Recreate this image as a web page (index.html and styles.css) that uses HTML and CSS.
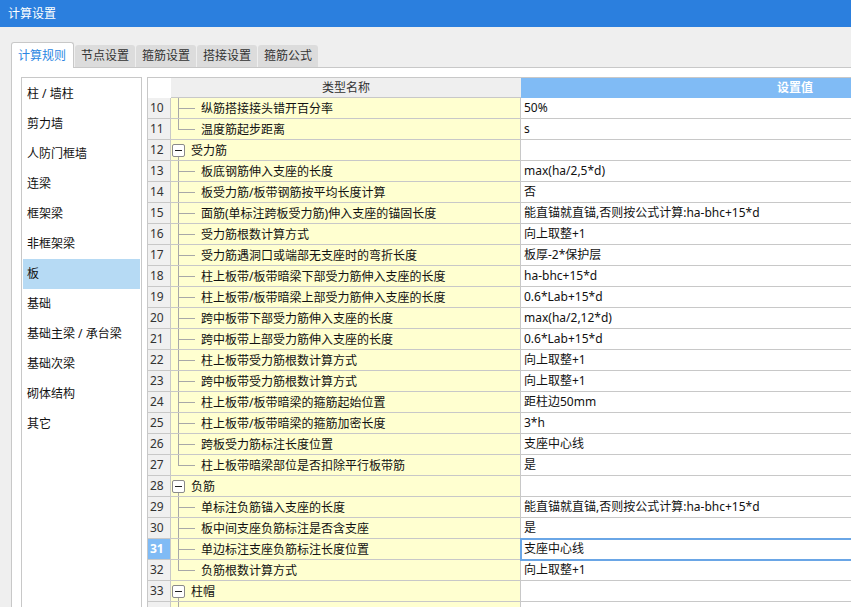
FILE: index.html
```html
<!DOCTYPE html>
<html lang="zh">
<head>
<meta charset="utf-8">
<title>计算设置</title>
<link rel="stylesheet" href="styles.css">
</head>
<body>
<div class="titlebar">计算设置</div>
<div class="tabs">
  <div class="tab active">计算规则</div>
  <div class="tab">节点设置</div>
  <div class="tab">箍筋设置</div>
  <div class="tab">搭接设置</div>
  <div class="tab">箍筋公式</div>
</div>
<div class="panel">
  <div class="sidebar">
    <div class="side-item">柱 / 墙柱</div>
    <div class="side-item">剪力墙</div>
    <div class="side-item">人防门框墙</div>
    <div class="side-item">连梁</div>
    <div class="side-item">框架梁</div>
    <div class="side-item">非框架梁</div>
    <div class="side-item sel">板</div>
    <div class="side-item">基础</div>
    <div class="side-item">基础主梁 / 承台梁</div>
    <div class="side-item">基础次梁</div>
    <div class="side-item">砌体结构</div>
    <div class="side-item">其它</div>
  </div>
  <div class="grid">
    <div class="row head">
      <div class="corner"></div>
      <div class="h-name">类型名称</div>
      <div class="h-value">设置值</div>
    </div>
    <div class="row"><div class="num">10</div><div class="name"><span class="tree"></span>纵筋搭接接头错开百分率</div><div class="val">50%</div></div>
    <div class="row"><div class="num">11</div><div class="name"><span class="tree last"></span>温度筋起步距离</div><div class="val">s</div></div>
    <div class="row"><div class="num">12</div><div class="name group"><span class="box"></span>受力筋</div><div class="val"></div></div>
    <div class="row"><div class="num">13</div><div class="name"><span class="tree"></span>板底钢筋伸入支座的长度</div><div class="val">max(ha/2,5*d)</div></div>
    <div class="row"><div class="num">14</div><div class="name"><span class="tree"></span>板受力筋/板带钢筋按平均长度计算</div><div class="val">否</div></div>
    <div class="row"><div class="num">15</div><div class="name"><span class="tree"></span>面筋(单标注跨板受力筋)伸入支座的锚固长度</div><div class="val">能直锚就直锚,否则按公式计算:ha-bhc+15*d</div></div>
    <div class="row"><div class="num">16</div><div class="name"><span class="tree"></span>受力筋根数计算方式</div><div class="val">向上取整+1</div></div>
    <div class="row"><div class="num">17</div><div class="name"><span class="tree"></span>受力筋遇洞口或端部无支座时的弯折长度</div><div class="val">板厚-2*保护层</div></div>
    <div class="row"><div class="num">18</div><div class="name"><span class="tree"></span>柱上板带/板带暗梁下部受力筋伸入支座的长度</div><div class="val">ha-bhc+15*d</div></div>
    <div class="row"><div class="num">19</div><div class="name"><span class="tree"></span>柱上板带/板带暗梁上部受力筋伸入支座的长度</div><div class="val">0.6*Lab+15*d</div></div>
    <div class="row"><div class="num">20</div><div class="name"><span class="tree"></span>跨中板带下部受力筋伸入支座的长度</div><div class="val">max(ha/2,12*d)</div></div>
    <div class="row"><div class="num">21</div><div class="name"><span class="tree"></span>跨中板带上部受力筋伸入支座的长度</div><div class="val">0.6*Lab+15*d</div></div>
    <div class="row"><div class="num">22</div><div class="name"><span class="tree"></span>柱上板带受力筋根数计算方式</div><div class="val">向上取整+1</div></div>
    <div class="row"><div class="num">23</div><div class="name"><span class="tree"></span>跨中板带受力筋根数计算方式</div><div class="val">向上取整+1</div></div>
    <div class="row"><div class="num">24</div><div class="name"><span class="tree"></span>柱上板带/板带暗梁的箍筋起始位置</div><div class="val">距柱边50mm</div></div>
    <div class="row"><div class="num">25</div><div class="name"><span class="tree"></span>柱上板带/板带暗梁的箍筋加密长度</div><div class="val">3*h</div></div>
    <div class="row"><div class="num">26</div><div class="name"><span class="tree"></span>跨板受力筋标注长度位置</div><div class="val">支座中心线</div></div>
    <div class="row"><div class="num">27</div><div class="name"><span class="tree last"></span>柱上板带暗梁部位是否扣除平行板带筋</div><div class="val">是</div></div>
    <div class="row"><div class="num">28</div><div class="name group"><span class="box"></span>负筋</div><div class="val"></div></div>
    <div class="row"><div class="num">29</div><div class="name"><span class="tree"></span>单标注负筋锚入支座的长度</div><div class="val">能直锚就直锚,否则按公式计算:ha-bhc+15*d</div></div>
    <div class="row"><div class="num">30</div><div class="name"><span class="tree"></span>板中间支座负筋标注是否含支座</div><div class="val">是</div></div>
    <div class="row"><div class="num sel">31</div><div class="name"><span class="tree"></span>单边标注支座负筋标注长度位置</div><div class="val sel">支座中心线</div></div>
    <div class="row"><div class="num">32</div><div class="name"><span class="tree last"></span>负筋根数计算方式</div><div class="val">向上取整+1</div></div>
    <div class="row"><div class="num">33</div><div class="name group"><span class="box"></span>柱帽</div><div class="val"></div></div>
    <div class="row"><div class="num"></div><div class="name"><span class="tree"></span></div><div class="val"></div></div>
  </div>
</div>
</body>
</html>
```
FILE: styles.css
```css
* { box-sizing: border-box; }
html, body { margin: 0; }
body {
  width: 851px;
  height: 607px;
  overflow: hidden;
  background: #efefef;
  font-family: "Noto Sans", "Noto Sans CJK SC", sans-serif;
  font-size: 12px;
  color: #111;
  display: flex;
  flex-direction: column;
}
.titlebar {
  flex: none;
  height: 27px;
  line-height: 27px;
  padding-left: 8px;
  background: #2b7fde;
  color: #fff;
  font-size: 12px;
}
.tabs {
  flex: none;
  display: flex;
  align-items: flex-end;
  gap: 1px;
  height: 25px;
  margin: 15px 0 0 11px;
}
.tab {
  height: 22px;
  line-height: 22px;
  padding: 0 6px;
  background: #dcdcdc;
  color: #333;
  border-radius: 3px 3px 0 0;
  white-space: nowrap;
}
.tab.active {
  position: relative;
  z-index: 1;
  height: 26px;
  line-height: 25px;
  margin-bottom: -1px;
  padding: 0 7px 0 6px;
  background: #fff;
  color: #2b86e2;
  border: 1px solid #c8c8c8;
  border-bottom: none;
}
.panel {
  flex: 1;
  min-height: 0;
  margin-left: 11px;
  background: #fff;
  border-left: 1px solid #c8c8c8;
  border-top: 1px solid #c8c8c8;
  display: flex;
  gap: 5px;
  padding: 9px 0 0 9px;
  overflow: hidden;
}
.sidebar {
  flex: none;
  width: 121px;
  border: 1px solid #c8c8c8;
  border-bottom: none;
  padding: 1px;
}
.side-item {
  height: 30px;
  line-height: 30px;
  padding-left: 4px;
  white-space: nowrap;
}
.side-item.sel { background: #b6daf4; }

.grid {
  flex: none;
  width: 922px;
  border-left: 1px solid #c8c8c8;
  border-top: 1px solid #c8c8c8;
}
.row {
  display: grid;
  grid-template-columns: 23px 350px 548px;
  height: 21px;
}
.row.head { height: 20px; }
.corner { background: #fff; }
.h-name {
  background: #efefef;
  border-bottom: 1px solid #c8c8c8;
  text-align: center;
  line-height: 19px;
  color: #333;
}
.h-value {
  background: #80bbf5;
  border-bottom: 1px solid #80bbf5;
  text-align: center;
  line-height: 19px;
  color: #fff;
  font-weight: bold;
}
.num {
  background: #f0f0f0;
  border-right: 1px solid #c8c8c8;
  border-bottom: 1px solid #c8c8c8;
  padding-left: 2px;
  line-height: 20px;
  color: #333;
}
.num.sel {
  background: #80bbf5;
  color: #fff;
  font-weight: bold;
}
.name {
  display: flex;
  align-items: center;
  background: #ffffd0;
  border-right: 1px solid #c8c8c8;
  border-bottom: 1px solid #c8c8c8;
  white-space: nowrap;
  overflow: hidden;
}
.name.group {
  background: #ffffd0 linear-gradient(#a8a8a8, #a8a8a8) 7px 100% / 1px 50% no-repeat;
}
.tree {
  flex: none;
  align-self: stretch;
  width: 17px;
  margin: 0 6px 0 7px;
  background:
    linear-gradient(#a8a8a8, #a8a8a8) 0 0 / 1px 100% no-repeat,
    linear-gradient(#a8a8a8, #a8a8a8) 0 50% / 100% 1px no-repeat;
}
.tree.last {
  background:
    linear-gradient(#a8a8a8, #a8a8a8) 0 0 / 1px 50% no-repeat,
    linear-gradient(#a8a8a8, #a8a8a8) 0 50% / 100% 1px no-repeat;
}
.box {
  flex: none;
  width: 13px;
  height: 13px;
  margin: 0 6px 0 1px;
  border: 1px solid #8a8a8a;
  border-radius: 2px;
  background: #fff;
  display: flex;
  align-items: center;
  justify-content: center;
}
.box::before {
  content: "";
  width: 7px;
  height: 1px;
  background: #222;
}
.val {
  background: #fff;
  border-bottom: 1px solid #c8c8c8;
  padding-left: 3px;
  line-height: 20px;
  white-space: nowrap;
}
.val.sel {
  position: relative;
  z-index: 1;
  outline: 2px solid #6aa6e6;
  outline-offset: -1px;
}
```
